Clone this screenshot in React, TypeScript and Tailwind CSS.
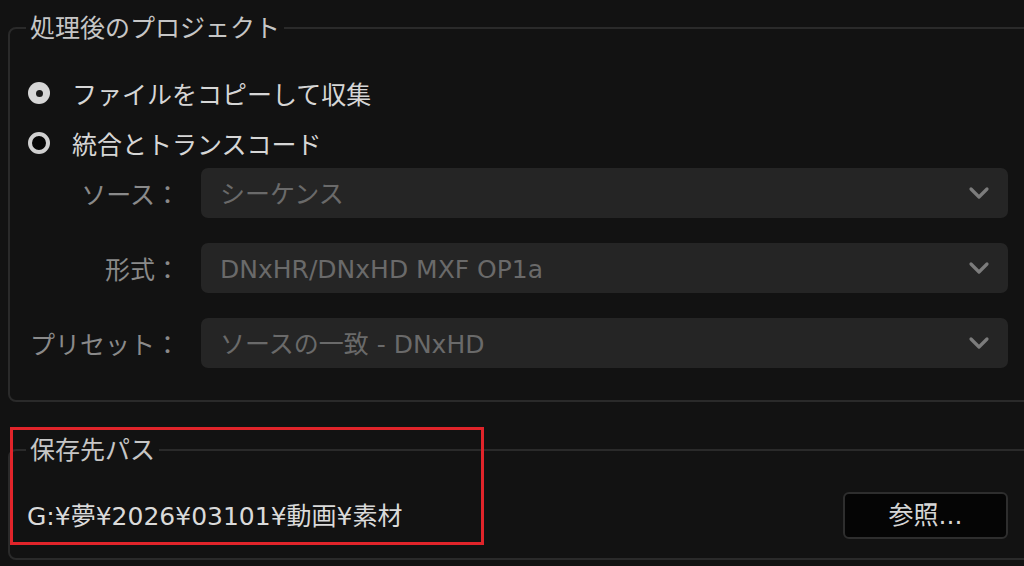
import React from "react";

const font = { fontFamily: '"DejaVu Sans", "Noto Sans CJK JP", sans-serif' };
const cjk = { fontFamily: '"Noto Sans CJK JP", sans-serif' };

function Chevron() {
  return (
    <svg width="22" height="14" viewBox="0 0 22 14" className="shrink-0">
      <polyline points="3,3 11,11 19,3" fill="none" stroke="#7c7c7c" strokeWidth="3.2" strokeLinecap="round" strokeLinejoin="round" />
    </svg>
  );
}

function SelectRow({ label, value }: { label: string; value: string }) {
  return (
    <div className="flex items-center h-[50px]">
      <div className="w-[170px] text-right text-[25px] leading-none text-[#8a8a8a] whitespace-nowrap" style={cjk}>{label}</div>
      <div className="ml-[21px] flex-1 h-[50px] rounded-[7px] bg-[#252525] flex items-center justify-between pl-[19px] pr-[18px]">
        <span className="pt-[2px] text-[25px] leading-none text-[#6a6a6a] whitespace-nowrap">{value}</span>
        <Chevron />
      </div>
    </div>
  );
}

export default function App() {
  return (
    <div className="relative w-[1024px] h-[566px] overflow-hidden bg-[#121212]" style={font}>
      <div className="pt-[10px] pl-[8px]">
        <fieldset className="w-[1030px] border-2 border-[#2a2a2a] rounded-[8px] pr-[28px] pb-[32px]">
          <legend className="ml-[16px] px-[4px] pb-[4px] text-[25px] leading-[32px] text-[#c6c6c6]" style={cjk}>処理後のプロジェクト</legend>
          <div className="pt-[22px] flex flex-col">
            <div className="flex items-center h-[50px] pl-[18px]">
              <div className="w-[22px] h-[22px] rounded-full bg-[#d6d6d6] flex items-center justify-center">
                <div className="w-[7px] h-[7px] rounded-full bg-[#1a1a1a]" />
              </div>
              <span className="ml-[22px] text-[25px] leading-none text-[#d6d6d6]" style={cjk}>ファイルをコピーして収集</span>
            </div>
            <div className="flex items-center h-[50px] pl-[18px]">
              <div className="w-[22px] h-[22px] rounded-full border-[4px] border-[#d0d0d0] bg-[#050505]" />
              <span className="ml-[22px] text-[25px] leading-none text-[#d6d6d6]" style={cjk}>統合とトランスコード</span>
            </div>
            <div className="flex flex-col gap-[25px]">
              <SelectRow label="ソース：" value="シーケンス" />
              <SelectRow label="形式：" value="DNxHR/DNxHD MXF OP1a" />
              <SelectRow label="プリセット：" value="ソースの一致 - DNxHD" />
            </div>
          </div>
        </fieldset>
        <fieldset className="mt-[30px] w-[1030px] border-2 border-[#2a2a2a] rounded-[8px] pr-[28px] pb-[19px]">
          <legend className="ml-[16px] px-[4px] pb-[4px] text-[25px] leading-[32px] text-[#c6c6c6]" style={cjk}>保存先パス</legend>
          <div className="pt-[24px] pl-[17px] flex items-center justify-between">
            <span className="pt-[2px] text-[25px] leading-none text-[#dadada] whitespace-nowrap">G:¥夢¥2026¥03101¥動画¥素材</span>
            <button className="w-[165px] h-[47px] rounded-[6px] bg-[#050505] border-2 border-[#2e2e2e] text-[25px] leading-none text-[#d6d6d6]">参照...</button>
          </div>
        </fieldset>
      </div>
      <div className="absolute left-[10px] top-[427px] w-[474px] h-[118px] border-[3px] border-[#e0242a]" />
    </div>
  );
}
